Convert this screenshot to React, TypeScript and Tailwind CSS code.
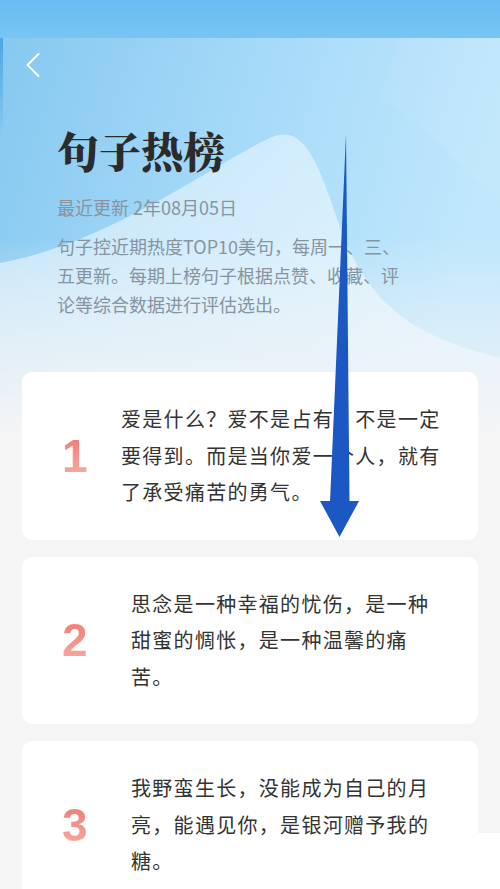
import React from "react";

const cards = [
  {
    n: "1",
    col: "w-[59px]",
    lines: ["爱是什么？爱不是占有，不是一定", "要得到。而是当你爱一个人，就有", "了承受痛苦的勇气。"],
  },
  {
    n: "2",
    col: "w-[69px]",
    lines: ["思念是一种幸福的忧伤，是一种", "甜蜜的惆怅，是一种温馨的痛", "苦。"],
  },
  {
    n: "3",
    col: "w-[69px]",
    lines: ["我野蛮生长，没能成为自己的月", "亮，能遇见你，是银河赠予我的", "糖。"],
  },
];

function HeaderBg() {
  return (
    <svg className="absolute left-0 top-[38px]" width="500" height="400" viewBox="0 0 500 400">
      <defs>
        <linearGradient id="hg" x1="0" y1="0" x2="1" y2="0.25">
          <stop offset="0" stopColor="#86c8f0" />
          <stop offset="0.55" stopColor="#a8dbf9" />
          <stop offset="1" stopColor="#c0e7fc" />
        </linearGradient>
        <linearGradient id="fade" x1="0" y1="0" x2="0" y2="1">
          <stop offset="0" stopColor="#f5f5f5" stopOpacity="0" />
          <stop offset="0.55" stopColor="#eef3f6" stopOpacity="0.6" />
          <stop offset="1" stopColor="#f5f5f5" stopOpacity="1" />
        </linearGradient>
        <linearGradient id="mt" x1="0" y1="0" x2="0" y2="1">
          <stop offset="0" stopColor="#ffffff" stopOpacity="0.45" />
          <stop offset="1" stopColor="#ffffff" stopOpacity="0.6" />
        </linearGradient>
        <linearGradient id="edge" x1="0" y1="0" x2="0" y2="1">
          <stop offset="0" stopColor="#4fa6e2" />
          <stop offset="1" stopColor="#4fa6e2" stopOpacity="0" />
        </linearGradient>
      </defs>
      <rect width="500" height="400" fill="url(#hg)" />
      <path
        d="M0,225 C110,205 215,125 270,100 C305,84 318,125 342,195 C372,272 420,300 500,320 L500,400 L0,400 Z"
        fill="url(#mt)"
      />
      <path d="M380,60 C430,90 470,140 500,160 L500,0 L400,0 Z" fill="#ffffff" fillOpacity="0.06" />
      <rect y="200" width="500" height="200" fill="url(#fade)" />
      <rect x="0" y="0" width="3" height="100" fill="url(#edge)" />
    </svg>
  );
}

export default function App() {
  return (
    <div className="relative w-[500px] h-[889px] overflow-hidden bg-[#f5f5f5] font-['Noto_Sans_CJK_SC',sans-serif]">
      <HeaderBg />
      <div className="relative">
        <div className="h-[38px] bg-gradient-to-b from-[#69bbf1] to-[#77c5f2]" />
        <div className="pl-[26px] pt-[15px]">
          <svg width="14" height="24" viewBox="0 0 14 24">
            <polyline points="12.5,1 1.5,12 12.5,23" fill="none" stroke="#ffffff" strokeWidth="1.8" strokeLinecap="round" strokeLinejoin="round" />
          </svg>
        </div>
        <div className="pl-[57px]">
          <h1 className="mt-[48px] text-[42px] leading-[50px] font-black text-[#2b2b2b] font-['Noto_Serif_CJK_SC','Noto_Sans_CJK_SC',serif]">
            句子热榜
          </h1>
          <p className="mt-[20px] text-[18px] leading-[24px] text-[#8794a0]">最近更新 2年08月05日</p>
          <div className="mt-[13px] text-[18px] leading-[29px] text-[#8794a0]">
            <p className="whitespace-nowrap">句子控近期热度TOP10美句，每周一、三、</p>
            <p className="whitespace-nowrap">五更新。每期上榜句子根据点赞、收藏、评</p>
            <p className="whitespace-nowrap">论等综合数据进行评估选出。</p>
          </div>
        </div>
        <div className="mt-[53px] px-[22px] flex flex-col gap-[17px]">
          {cards.map((c) => (
            <div key={c.n} className="flex items-center bg-white rounded-[10px] pl-[40px] pr-[30px] py-[29px]">
              <div className={`${c.col} shrink-0`}>
                <span className="text-[46px] leading-none font-bold font-['Liberation_Sans',sans-serif] bg-gradient-to-b from-[#ee746d] to-[#f8aea8] bg-clip-text text-transparent">
                  {c.n}
                </span>
              </div>
              <div className="text-[20px] leading-[36.5px] tracking-[1.3px] text-[#333333]">
                {c.lines.map((l, i) => (
                  <p key={i} className="whitespace-nowrap">{l}</p>
                ))}
              </div>
            </div>
          ))}
        </div>
      </div>
      <div className="absolute right-0 top-[833px] w-[27px] h-[56px] bg-white" />
      <svg className="absolute left-0 top-0 pointer-events-none" width="500" height="889" viewBox="0 0 500 889">
        <polygon points="346,134 349.5,502 330,502" fill="#1b58c4" />
        <polygon points="320,501 359,501 339.5,537" fill="#1b58c4" />
      </svg>
    </div>
  );
}
